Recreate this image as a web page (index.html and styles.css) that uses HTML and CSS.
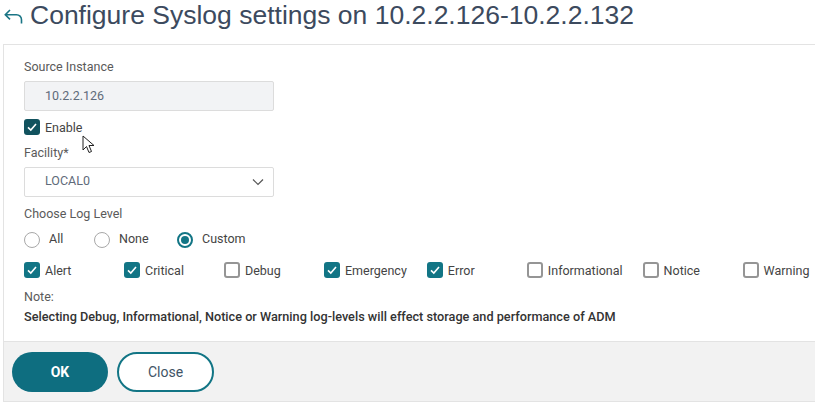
FILE: index.html
```html
<!DOCTYPE html>
<html>
<head>
<meta charset="utf-8">
<link rel="stylesheet" href="styles.css">
</head>
<body>
<header class="page-head">
  <svg class="back" width="19" height="15" viewBox="0 0 19 15"><path d="M6 1 L1.3 5.7 L6 10.4 M1.3 5.7 H12.5 A5 5 0 0 1 17.5 10.7 V14.5" fill="none" stroke="#1a7585" stroke-width="1.6"/></svg>
  <h1>Configure Syslog settings on 10.2.2.126-10.2.2.132</h1>
</header>
<div class="panel">
  <div class="body">
    <div class="label">Source Instance</div>
    <div class="input">10.2.2.126</div>
    <label class="check-row enable"><span class="cb on dark"><svg viewBox="0 0 16 16"><path d="M4 8.3 L6.8 11 L12 5" fill="none" stroke="#fff" stroke-width="1.6"/></svg></span>Enable</label>
    <div class="label facility">Facility*</div>
    <div class="select">LOCAL0<svg class="chev" width="12" height="8" viewBox="0 0 12 8"><path d="M1 1.5 L6 6.5 L11 1.5" fill="none" stroke="#555" stroke-width="1.2"/></svg></div>
    <div class="label loglevel">Choose Log Level</div>
    <div class="radios">
      <span class="radio-item"><span class="radio"></span>All</span>
      <span class="radio-item"><span class="radio"></span>None</span>
      <span class="radio-item"><span class="radio on"></span>Custom</span>
    </div>
    <div class="levels">
      <span class="lvl"><span class="cb on"><svg viewBox="0 0 16 16"><path d="M4 8.3 L6.8 11 L12 5" fill="none" stroke="#fff" stroke-width="1.6"/></svg></span>Alert</span>
      <span class="lvl"><span class="cb on"><svg viewBox="0 0 16 16"><path d="M4 8.3 L6.8 11 L12 5" fill="none" stroke="#fff" stroke-width="1.6"/></svg></span>Critical</span>
      <span class="lvl"><span class="cb"></span>Debug</span>
      <span class="lvl"><span class="cb on"><svg viewBox="0 0 16 16"><path d="M4 8.3 L6.8 11 L12 5" fill="none" stroke="#fff" stroke-width="1.6"/></svg></span>Emergency</span>
      <span class="lvl"><span class="cb on"><svg viewBox="0 0 16 16"><path d="M4 8.3 L6.8 11 L12 5" fill="none" stroke="#fff" stroke-width="1.6"/></svg></span>Error</span>
      <span class="lvl"><span class="cb"></span>Informational</span>
      <span class="lvl"><span class="cb"></span>Notice</span>
      <span class="lvl"><span class="cb"></span>Warning</span>
    </div>
    <div class="label note">Note:</div>
    <div class="warn">Selecting Debug, Informational, Notice or Warning log-levels will effect storage and performance of ADM</div>
  </div>
  <div class="footer">
    <button class="btn primary">OK</button>
    <button class="btn secondary">Close</button>
  </div>
  <svg class="cursor" width="14" height="20" viewBox="0 0 14 20"><path d="M1 1 L1 15 L4.5 11.5 L7 17.5 L9.5 16.5 L7 10.5 L12 10.5 Z" fill="#fff" stroke="#222" stroke-width="1"/></svg>
</div>
</body>
</html>
```
FILE: styles.css
```css
html, body { margin: 0; padding: 0; background: #fff; }
body { font-family: Roboto, "Open Sans", sans-serif; font-size: 12.5px; color: #555; overflow: hidden; width: 815px; height: 403px; }
.page-head { display: flex; align-items: flex-start; height: 44px; padding-left: 4px; }
.back { margin-right: 7px; margin-top: 9px; flex: none; }
h1 { margin: 0; font-family: "Liberation Sans", Arial, sans-serif; font-weight: normal; font-size: 26.5px; color: #3c4a5e; line-height: 30px; white-space: nowrap; }
.panel { position: relative; margin-left: 3px; width: 830px; border-top: 1px solid #e3e3e3; border-left: 1px solid #e3e3e3; }
.body { padding: 13px 0 15px 20px; }
.label { line-height: 18px; color: #5a5a5a; }
.input, .select { box-sizing: border-box; width: 250px; height: 30px; border: 1px solid #dcdcdc; border-radius: 2px; margin-top: 5px; padding-left: 20px; line-height: 28px; color: #5f6b7a; }
.input { background: #f2f3f5; }
.select { background: #fff; display: flex; justify-content: space-between; align-items: center; padding-right: 9px; line-height: 26px; padding-bottom: 2px; }
.select .chev { margin-top: 2px; }
.check-row { display: flex; align-items: center; height: 22px; margin-top: 5px; color: #444; }
.cb { box-sizing: border-box; width: 16px; height: 16px; border-radius: 3px; border: 2px solid #959595; margin-right: 5px; display: inline-flex; flex: none; background: #fff; }
.cb.on { background: #127585; border: none; }
.cb.on.dark { background: #11525e; }
.cb svg { width: 16px; height: 16px; }
.facility { margin-top: 6px; }
.loglevel { margin-top: 8px; }
.radios { display: flex; height: 22px; margin-top: 4px; align-items: center; color: #444; }
.radio-item { display: flex; align-items: center; }
.radio-item:nth-child(1) { width: 70px; }
.radio-item:nth-child(2) { width: 83px; }
.radio { box-sizing: border-box; width: 16px; height: 16px; border-radius: 50%; border: 1px solid #a8a8a8; margin-right: 9px; margin-top: 3px; flex: none; }
.radio.on { border: 2px solid #127585; position: relative; }
.radio.on::after { content: ""; position: absolute; left: 2px; top: 2px; width: 8px; height: 8px; border-radius: 50%; background: #127585; }
.levels { display: flex; gap: 20px; height: 22px; margin-top: 10px; align-items: center; color: #444; white-space: nowrap; }
.lvl { display: flex; align-items: center; min-width: 80px; }
.lvl .cb { margin-right: 5px; }
.note { margin-top: 7px; }
.warn { line-height: 18px; margin-top: 2px; color: #333; font-weight: 500; font-size: 12.7px; }
.footer { background: #f2f2f2; border-top: 1px solid #e3e3e3; border-bottom: 1px solid #e3e3e3; padding: 10px 0 9px 8px; display: flex; gap: 9px; }
.btn { box-sizing: border-box; height: 40px; border-radius: 20px; font-family: Roboto, sans-serif; font-size: 14px; cursor: pointer; }
.btn.primary { width: 96px; background: #0e6e80; color: #fff; border: none; font-weight: 700; }
.btn.secondary { width: 97px; background: #fff; color: #3f5466; border: 2px solid #127585; }
.cursor { position: absolute; left: 78px; top: 90px; }
```
